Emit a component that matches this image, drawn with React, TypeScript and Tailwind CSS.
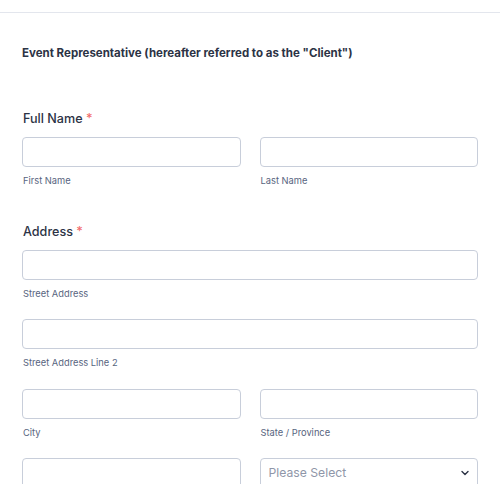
import React from "react";

const inputCls =
  "block w-full h-[30px] rounded-[4px] border border-[#c8ceda] bg-white";

function Sub({ children }: { children: React.ReactNode }) {
  return (
    <div className="mt-[7px] text-[9.3px] leading-[14px] text-[#57647e] pl-[1px]">
      {children}
    </div>
  );
}

function Label({ children }: { children: React.ReactNode }) {
  return (
    <div className="text-[12.6px] leading-[20px] font-medium text-[#2c3345] pl-[1px]">
      {children} <span className="text-[#f26b6b]">*</span>
    </div>
  );
}

export default function App() {
  return (
    <div className="w-[500px] h-[484px] overflow-hidden bg-white font-['Inter',sans-serif]">
      <div className="h-3" />
      <div className="h-px bg-[#e3e6ed]" />
      <div className="px-[22px]">
        <div className="mt-[32px] text-[11.5px] leading-[16px] font-bold text-[#2c3345]">
          Event Representative (hereafter referred to as the "Client")
        </div>

        <div className="mt-[48px]">
          <Label>Full Name</Label>
        </div>
        <div className="mt-[8px] grid grid-cols-2 gap-[19px]">
          <div>
            <div className={inputCls} />
            <Sub>First Name</Sub>
          </div>
          <div>
            <div className={inputCls} />
            <Sub>Last Name</Sub>
          </div>
        </div>

        <div className="mt-[34px]">
          <Label>Address</Label>
        </div>
        <div className="mt-[8px] flex flex-col gap-[18.3px]">
          <div>
            <div className={inputCls} />
            <Sub>Street Address</Sub>
          </div>
          <div>
            <div className={inputCls} />
            <Sub>Street Address Line 2</Sub>
          </div>
          <div className="grid grid-cols-2 gap-[19px]">
            <div>
              <div className={inputCls} />
              <Sub>City</Sub>
            </div>
            <div>
              <div className={inputCls} />
              <Sub>State / Province</Sub>
            </div>
          </div>
          <div className="grid grid-cols-2 gap-[19px]">
            <div>
              <div className={inputCls} />
            </div>
            <div>
              <div className={inputCls + " flex items-center justify-between pl-[8px] pr-[7px]"}>
                <span className="text-[12.2px] text-[#8f96a8]">Please Select</span>
                <svg width="10" height="10" viewBox="0 0 10 10" fill="none">
                  <path d="M2 3.5 L5 6.5 L8 3.5" stroke="#2c3345" strokeWidth="1.4" strokeLinecap="round" strokeLinejoin="round" />
                </svg>
              </div>
            </div>
          </div>
        </div>
      </div>
    </div>
  );
}
